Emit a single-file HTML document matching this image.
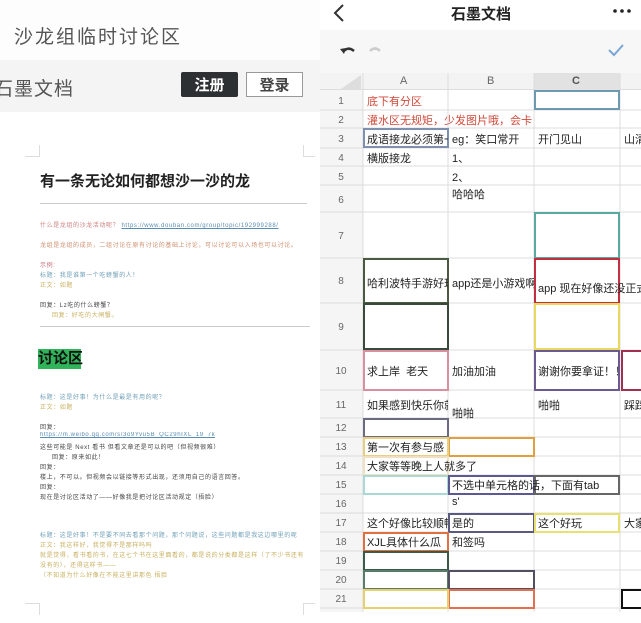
<!DOCTYPE html>
<html><head><meta charset="utf-8"><style>
*{margin:0;padding:0;box-sizing:border-box}
body{width:641px;height:623px;overflow:hidden;background:#fff;position:relative;font-family:"Liberation Sans","Noto Sans CJK SC",sans-serif}
.a{position:absolute;white-space:nowrap}
.t{font-size:6px;position:absolute;white-space:nowrap;letter-spacing:0.6px;max-width:272px;overflow:hidden}
.c{position:absolute;font-size:11px;color:#222;white-space:nowrap;overflow:hidden}
</style></head><body>
<!-- LEFT -->
<div class="a" style="left:0;top:0;width:320px;height:60px;background:#fdfdfd"></div>
<div class="a" style="left:14px;top:22px;font-size:19px;color:#555;letter-spacing:2px">沙龙组临时讨论区</div>
<div class="a" style="left:0;top:60px;width:320px;height:52px;background:#f4f4f4"></div>
<div class="a" style="left:-6px;top:74px;font-size:19px;color:#555;letter-spacing:1px">石墨文档</div>
<div class="a" style="left:181px;top:72px;width:57px;height:25px;background:#2d3033;border-radius:2px;color:#fff;font-size:15px;font-weight:bold;text-align:center;line-height:27px">注册</div>
<div class="a" style="left:246px;top:72px;width:57px;height:25px;background:#fff;border:1px solid #999;color:#444;font-size:15px;font-weight:bold;text-align:center;line-height:25px">登录</div>
<div class="a" style="left:25px;top:145px;width:15px;height:12px;border-right:1px solid #ddd;border-bottom:1px solid #ddd"></div>
<div class="a" style="left:303px;top:145px;width:12px;height:12px;border-left:1px solid #ddd;border-bottom:1px solid #ddd"></div>
<div class="a" style="left:40px;top:170px;font-size:15px;font-weight:bold;color:#222">有一条无论如何都想沙一沙的龙</div>
<div class="a" style="left:40px;top:203px;width:267px;height:1px;background:#ccc"></div>
<div class="t" style="left:40px;top:220px;color:#d08080">什么是龙组的沙龙活动呢？ <span style="color:#5a8cb0;text-decoration:underline">https://www.douban.com/group/topic/192999288/</span></div>
<div class="t" style="left:40px;top:240px;color:#d09070">龙组是龙组的成员，二组讨论在原有讨论的基础上讨论，可以讨论可以入场也可以讨论。</div>
<div class="t" style="left:40px;top:260px;color:#c06a7a">示例:</div>
<div class="t" style="left:40px;top:270px;color:#70a0b8">标题：我是谁第一个吃螃蟹的人！</div>
<div class="t" style="left:40px;top:280px;color:#c8b060">正文：如题</div>
<div class="t" style="left:40px;top:300px;color:#444">回复：Lz吃的什么螃蟹？</div>
<div class="t" style="left:52px;top:310px;color:#c8b060">回复：好吃的大闸蟹。</div>
<div class="a" style="left:40px;top:326px;width:270px;height:1px;background:#ccc"></div>
<div class="a" style="left:38px;top:349px;width:43px;height:20px;background:#2fb45a;font-size:15px;font-weight:bold;color:#111;line-height:20px">讨论区</div>
<div class="t" style="left:40px;top:392px;color:#70a0b8">标题：这是好事！为什么是最是有用的呢？</div>
<div class="t" style="left:40px;top:402px;color:#c8b060">正文：如题</div>
<div class="t" style="left:40px;top:422px;color:#444">回复：</div>
<div class="t" style="left:40px;top:432px;color:#5a8cb0;text-decoration:underline">https://m.weibo.qq.com/s/3o9Yvu5B_QC29hIXL_19_7k</div>
<div class="t" style="left:40px;top:442px;color:#444">这些可能是 Next 看书 但看文章还是可以的吧（但视频很难）</div>
<div class="t" style="left:52px;top:452px;color:#444">回复：原来如此！</div>
<div class="t" style="left:40px;top:462px;color:#444">回复：</div>
<div class="t" style="left:40px;top:472px;color:#444">楼上，不可以。但视频会以链接等形式出现，还须用自己的语言回答。</div>
<div class="t" style="left:40px;top:482px;color:#444">回复：</div>
<div class="t" style="left:40px;top:492px;color:#444">现在是讨论区活动了——好像我是把讨论区活动规定（捂脸）</div>
<div class="t" style="left:40px;top:530px;color:#70a0b8">标题：这是好事！不是要不同去看那个问题，那个问题说，这些问题都是我这边哪里的呢</div>
<div class="t" style="left:40px;top:540px;color:#c8b060">正文：我这样好，我觉得不是那样吗吗</div>
<div class="t" style="left:40px;top:550px;color:#c8b060">就是觉得，看书看的书，在这七个书在这里面看的，都是说的分类都是这样（了不少书还有</div>
<div class="t" style="left:40px;top:560px;color:#c8b060">没有的），还得这样书——</div>
<div class="t" style="left:40px;top:570px;color:#c8b060">（不知道为什么好像在不能这里讲那色 捂脸</div>
<div class="a" style="left:25px;top:603px;width:15px;height:12px;border-right:1px solid #ddd;border-top:1px solid #ddd"></div>
<div class="a" style="left:303px;top:603px;width:12px;height:12px;border-left:1px solid #ddd;border-top:1px solid #ddd"></div>

<!-- RIGHT -->
<div class="a" style="left:320px;top:0;width:321px;height:623px;background:#fff"></div>
<svg class="a" style="left:332px;top:3px" width="14" height="20"><path d="M11 2 L3 10 L11 18" stroke="#333" stroke-width="2" fill="none"/></svg>
<div class="a" style="left:451px;top:3px;font-size:15px;font-weight:bold;color:#222">石墨文档</div>
<svg class="a" style="left:612px;top:8px" width="22" height="6"><circle cx="3" cy="3" r="1.8" fill="#222"/><circle cx="10" cy="3" r="1.8" fill="#222"/><circle cx="17" cy="3" r="1.8" fill="#222"/></svg>
<div class="a" style="left:320px;top:30px;width:321px;height:43px;background:#f7f7f7"></div>
<svg class="a" style="left:338px;top:44px" width="50" height="14"><path d="M5 8 Q10 2 16 7" stroke="#333" stroke-width="2.5" fill="none"/><path d="M2 5 L6 10 L8 4Z" fill="#333"/><path d="M42 7 Q37 2 32 7" stroke="#ccc" stroke-width="2.5" fill="none"/></svg>
<svg class="a" style="left:607px;top:43px" width="18" height="14"><path d="M2 7 L7 12 L16 2" stroke="#7aa6d6" stroke-width="2" fill="none"/></svg>
<div class="a" style="left:320px;top:73px;width:321px;height:17px;background:#f3f3f3;border-bottom:1px solid #ddd"></div>
<div class="a" style="left:534px;top:73px;width:86px;height:17px;background:#e2e2e2"></div>
<div class="a" style="left:320px;top:90px;width:43px;height:533px;background:#f5f5f5"></div>
<svg class="a" style="left:335px;top:75px" width="26" height="14"><path d="M26 0 L26 14 L6 14Z" fill="#ddd"/></svg>
<div class="a" style="left:400px;top:75px;font-size:11px;color:#666">A</div>
<div class="a" style="left:487px;top:75px;font-size:11px;color:#666">B</div>
<div class="a" style="left:572px;top:75px;font-size:11px;color:#555;font-weight:bold">C</div>
<svg class="a" style="left:320px;top:73px" width="321" height="540">
<g stroke="#dcdcdc" stroke-width="1">
<line x1="43" y1="0" x2="43" y2="540"/><line x1="128" y1="0" x2="128" y2="540"/><line x1="214" y1="0" x2="214" y2="540"/><line x1="300" y1="0" x2="300" y2="540"/>
<line x1="0" y1="37" x2="321" y2="37"/><line x1="0" y1="55" x2="321" y2="55"/><line x1="0" y1="75" x2="321" y2="75"/><line x1="0" y1="93" x2="321" y2="93"/><line x1="0" y1="112" x2="321" y2="112"/><line x1="0" y1="139" x2="321" y2="139"/><line x1="0" y1="185" x2="321" y2="185"/><line x1="0" y1="230" x2="321" y2="230"/><line x1="0" y1="277" x2="321" y2="277"/><line x1="0" y1="317" x2="321" y2="317"/><line x1="0" y1="345" x2="321" y2="345"/><line x1="0" y1="364" x2="321" y2="364"/><line x1="0" y1="383" x2="321" y2="383"/><line x1="0" y1="402" x2="321" y2="402"/><line x1="0" y1="421" x2="321" y2="421"/><line x1="0" y1="440" x2="321" y2="440"/><line x1="0" y1="459" x2="321" y2="459"/><line x1="0" y1="478" x2="321" y2="478"/><line x1="0" y1="497" x2="321" y2="497"/><line x1="0" y1="516" x2="321" y2="516"/><line x1="0" y1="535" x2="321" y2="535"/>
</g>
<g font-size="10" fill="#666" text-anchor="middle" font-family="Liberation Sans">
<text x="21" y="31">1</text><text x="21" y="50">2</text><text x="21" y="69">3</text><text x="21" y="88">4</text><text x="21" y="107">5</text><text x="21" y="130">6</text><text x="21" y="166">7</text><text x="21" y="211">8</text><text x="21" y="257">9</text><text x="21" y="301">10</text><text x="21" y="335">11</text><text x="21" y="358">12</text><text x="21" y="377">13</text><text x="21" y="396">14</text><text x="21" y="415">15</text><text x="21" y="434">16</text><text x="21" y="453">17</text><text x="21" y="472">18</text><text x="21" y="491">19</text><text x="21" y="510">20</text><text x="21" y="529">21</text>
</g>
<g fill="none" stroke-width="2">
<rect x="215" y="18" width="84" height="18" stroke="#6e9ab0"/>
<rect x="44" y="56" width="84" height="18" stroke="#7f8fb0"/>
<rect x="215" y="140" width="84" height="45" stroke="#5aa8a0"/>
<rect x="44" y="186" width="84" height="44" stroke="#4a5a40"/>
<rect x="215" y="186" width="84" height="44" stroke="#c03040"/>
<rect x="44" y="231" width="84" height="45" stroke="#3a4a3a"/>
<rect x="215" y="231" width="84" height="45" stroke="#e8d860"/>
<rect x="44" y="278" width="84" height="39" stroke="#d890a0"/>
<rect x="215" y="278" width="84" height="39" stroke="#6a5a90"/>
<rect x="302" y="278" width="30" height="39" stroke="#a03050"/>
<rect x="44" y="346" width="84" height="18" stroke="#6a6a80"/>
<rect x="129" y="365" width="85" height="18" stroke="#e0a040"/>
<rect x="44" y="365" width="84" height="18" stroke="#e8d080"/>
<rect x="44" y="384" width="84" height="18" stroke="#f0e0c0"/>
<rect x="44" y="403" width="84" height="18" stroke="#a8d8d8"/>
<rect x="129" y="403" width="85" height="18" stroke="#5a5a90"/>
<rect x="215" y="403" width="84" height="18" stroke="#666"/>
<rect x="129" y="441" width="85" height="18" stroke="#5a5a80"/>
<rect x="215" y="441" width="84" height="18" stroke="#e8e070"/>
<rect x="44" y="460" width="84" height="18" stroke="#e07040"/>
<rect x="44" y="479" width="84" height="18" stroke="#3a5a4a"/>
<rect x="44" y="498" width="84" height="18" stroke="#5a7a6a"/>
<rect x="129" y="498" width="85" height="18" stroke="#505060"/>
<rect x="129" y="517" width="85" height="18" stroke="#e07050"/>
<rect x="44" y="517" width="84" height="18" stroke="#e8d070"/>
<rect x="302" y="517" width="30" height="18" stroke="#111"/>
</g>
</svg>
<div class="a" style="left:320px;top:612px;width:321px;height:11px;background:#fff"></div>
<div class="c" style="left:367px;top:93px;color:#d04a3a">底下有分区</div>
<div class="c" style="left:367px;top:112px;color:#d04a3a">灌水区无规矩，少发图片哦，会卡</div>
<div class="c" style="left:367px;top:131px;width:81px">成语接龙必须第一</div>
<div class="c" style="left:452px;top:131px">eg：笑口常开</div>
<div class="c" style="left:538px;top:131px">开门见山</div>
<div class="c" style="left:624px;top:131px">山清</div>
<div class="c" style="left:367px;top:150px">横版接龙</div>
<div class="c" style="left:452px;top:150px">1、</div>
<div class="c" style="left:452px;top:169px">2、</div>
<div class="c" style="left:452px;top:186px">哈哈哈</div>
<div class="c" style="left:367px;top:275px;width:81px">哈利波特手游好玩</div>
<div class="c" style="left:452px;top:275px;width:82px">app还是小游戏啊</div>
<div class="c" style="left:538px;top:280px">app 现在好像还没正式</div>
<div class="c" style="left:367px;top:363px">求上岸&nbsp; 老天</div>
<div class="c" style="left:452px;top:363px">加油加油</div>
<div class="c" style="left:538px;top:363px;width:80px">谢谢你要拿证！！</div>
<div class="c" style="left:367px;top:397px;width:81px">如果感到快乐你就</div>
<div class="c" style="left:452px;top:405px">啪啪</div>
<div class="c" style="left:538px;top:397px">啪啪</div>
<div class="c" style="left:624px;top:397px">踩踩</div>
<div class="c" style="left:367px;top:439px">第一次有参与感</div>
<div class="c" style="left:367px;top:458px">大家等等晚上人就多了</div>
<div class="c" style="left:452px;top:477px">不选中单元格的话，下面有tab</div>
<div class="c" style="left:452px;top:496px">s'</div>
<div class="c" style="left:367px;top:515px;width:81px">这个好像比较顺畅</div>
<div class="c" style="left:452px;top:515px">是的</div>
<div class="c" style="left:538px;top:515px">这个好玩</div>
<div class="c" style="left:624px;top:515px">大家</div>
<div class="c" style="left:367px;top:534px">XJL具体什么瓜</div>
<div class="c" style="left:452px;top:534px">和签吗</div>
</body></html>
